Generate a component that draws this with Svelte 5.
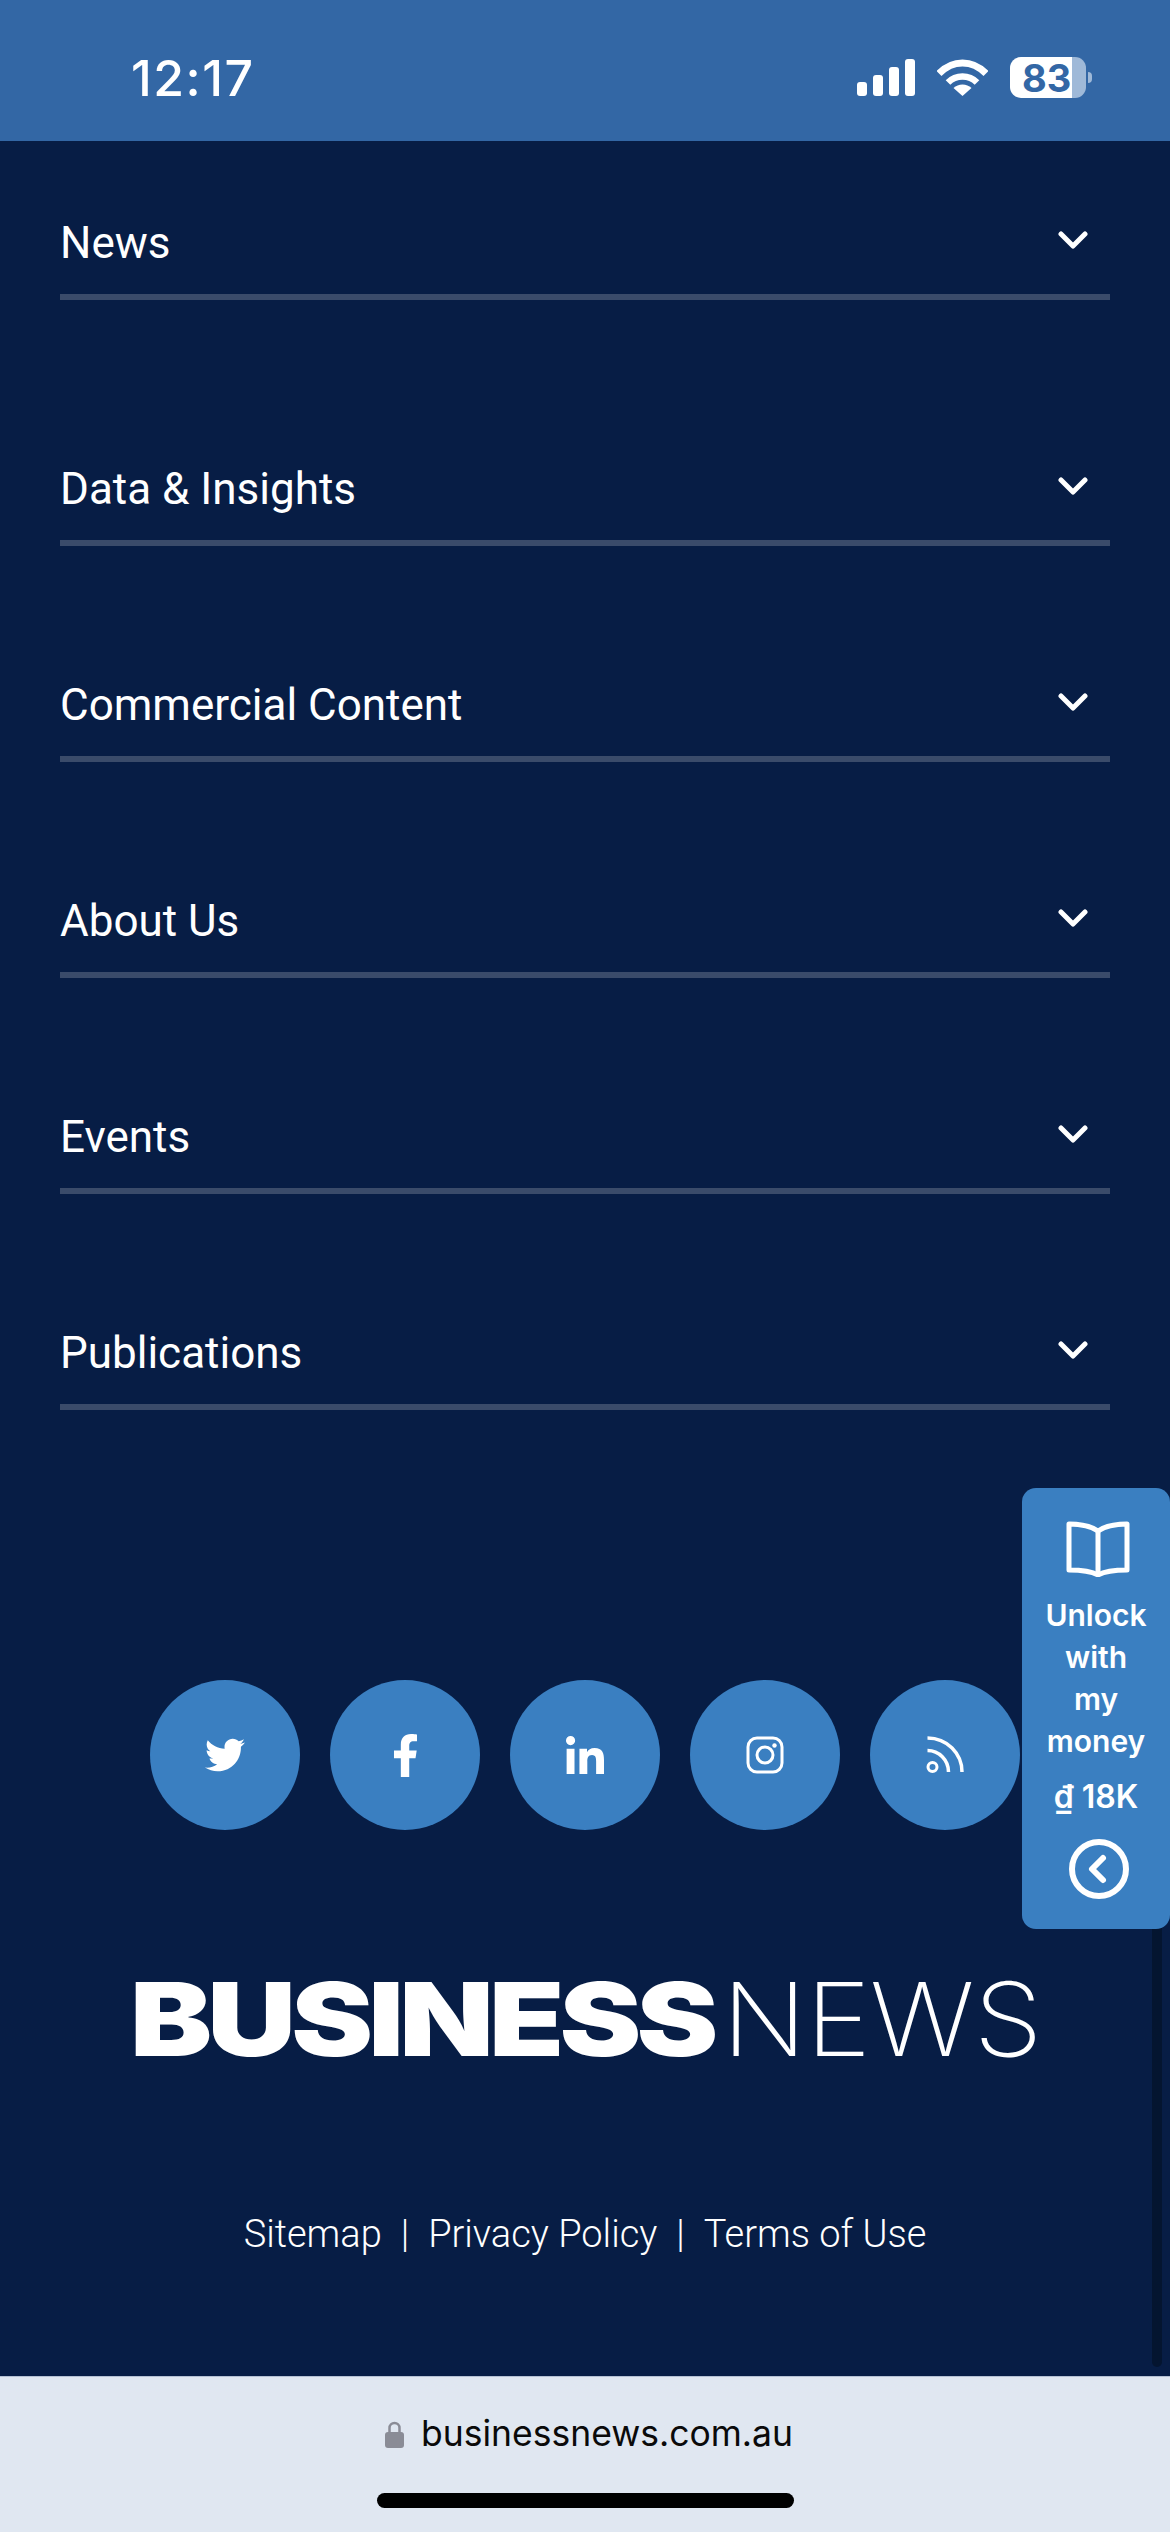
<script>
  const sections = ['News', 'Data & Insights', 'Commercial Content', 'About Us', 'Events', 'Publications'];
</script>

<div class="page">
  <header class="status">
    <span class="time">12:17</span>
    <div class="status-icons">
      <div class="signal">
        <i class="b1"></i><i class="b2"></i><i class="b3"></i><i class="b4"></i>
      </div>
      <svg class="wifi" viewBox="0 0 51 37" aria-hidden="true">
        <path d="M2 14.500C8.500 8 16.500 4 25.500 4S42.500 8 49 14.500" fill="none" stroke="#fff" stroke-width="7"/>
        <path d="M11 23.500C15 19.500 20 17.500 25.500 17.500S36 19.500 40 23.500" fill="none" stroke="#fff" stroke-width="6.500"/>
        <path d="M16.500 29C19 26.700 22 25.500 25.500 25.500S32 26.700 34.500 29L25.500 37Z" fill="#fff"/>
      </svg>
      <div class="battery">
        <div class="cell"><span>83</span></div>
        <i class="nub"></i>
      </div>
    </div>
  </header>

  <nav class="menu">
    {#each sections as name, i}
      <div class="row" class:first={i === 0}>
        <span class="name">{name}</span>
        <svg class="chev" viewBox="0 0 30 18" aria-hidden="true">
          <path d="M3 3L15 15L27 3" fill="none" stroke="#fff" stroke-width="5" stroke-linecap="round" stroke-linejoin="round"/>
        </svg>
      </div>
    {/each}
  </nav>

  <div class="social">
    <div class="circle">
      <svg class="tw" viewBox="0 0 512 512" aria-hidden="true"><path fill="#fff" d="M459.37 151.716c.325 4.548.325 9.097.325 13.645 0 138.72-105.583 298.558-298.558 298.558-59.452 0-114.68-17.219-161.137-47.106 8.447.974 16.568 1.299 25.34 1.299 49.055 0 94.213-16.568 130.274-44.832-46.132-.975-84.792-31.188-98.112-72.772 6.498.974 12.995 1.624 19.818 1.624 9.421 0 18.843-1.3 27.614-3.573-48.081-9.747-84.143-51.98-84.143-102.985v-1.299c13.969 7.797 30.214 12.67 47.431 13.319-28.264-18.843-46.781-51.005-46.781-87.391 0-19.492 5.197-37.36 14.294-52.954 51.655 63.675 129.3 105.258 216.365 109.807-1.624-7.797-2.599-15.918-2.599-24.04 0-57.828 46.782-104.934 104.934-104.934 30.213 0 57.502 12.67 76.67 33.137 23.715-4.548 46.456-13.32 66.599-25.34-7.798 24.366-24.366 44.833-46.132 57.827 21.117-2.273 41.584-8.122 60.426-16.243-14.292 20.791-32.161 39.308-52.628 54.253z"/></svg>
    </div>
    <div class="circle">
      <svg class="fb" viewBox="0 0 320 512" aria-hidden="true"><path fill="#fff" d="M279.14 288l14.22-92.66h-88.91v-60.13c0-25.35 12.42-50.06 52.24-50.06h40.42V6.26S260.43 0 225.36 0c-73.22 0-121.08 44.38-121.08 124.72v70.62H22.89V288h81.39v224h100.17V288z"/></svg>
    </div>
    <div class="circle">
      <svg class="li" viewBox="0 0 448 448" aria-hidden="true"><path fill="#fff" d="M100.28 448H7.4V148.9h92.88zM53.79 108.1C24.09 108.1 0 83.5 0 53.8a53.79 53.79 0 0 1 107.58 0c0 29.7-24.1 54.3-53.79 54.3zM447.9 448h-92.68V302.4c0-34.7-.7-79.2-48.29-79.2-48.29 0-55.69 37.7-55.69 76.7V448h-92.78V148.9h89.08v40.8h1.3c12.4-23.5 42.69-48.3 87.88-48.3 94 0 111.28 61.9 111.28 142.3V448z"/></svg>
    </div>
    <div class="circle">
      <svg class="ig" viewBox="0 0 38 38" fill="none" stroke="#fff" aria-hidden="true">
        <rect x="2" y="2" width="34" height="34" rx="9" stroke-width="3"/>
        <circle cx="19" cy="19" r="8" stroke-width="3"/>
        <circle cx="28.500" cy="9.500" r="2.200" fill="#fff" stroke="none"/>
      </svg>
    </div>
    <div class="circle">
      <svg class="rss" viewBox="0 0 38 38" fill="none" stroke="#fff" aria-hidden="true">
        <circle cx="6.500" cy="31" r="4.500" stroke-width="3"/>
        <path d="M1.500 14.500C13 14.500 22.500 24 22.500 36" stroke-width="3.500"/>
        <path d="M1.500 2C21 2 36 17.500 36 36" stroke-width="3.500"/>
      </svg>
    </div>
  </div>

  <div class="logo"><b>BUSINESS</b><span>NEWS</span></div>

  <div class="links">
    <span>Sitemap</span><i>|</i><span>Privacy Policy</span><i>|</i><span>Terms of Use</span>
  </div>

  <footer class="urlbar">
    <div class="url">
      <svg class="lock" viewBox="0 0 19 27" aria-hidden="true">
        <path d="M4.500 12V7a5 5 0 0 1 10 0v5" fill="none" stroke="#8a8c96" stroke-width="2.500"/>
        <rect y="11" width="19" height="16" rx="3" fill="#8a8c96"/>
      </svg>
      <span>businessnews.com.au</span>
    </div>
    <div class="home"></div>
  </footer>

  <div class="scrollbar"></div>

  <aside class="unlock">
    <svg class="book" viewBox="0 0 66 56" fill="none" stroke="#fff" stroke-width="5" aria-hidden="true">
      <path d="M33 10C26 5 14 3 4 3V49C14 49 26 50 33 54C40 50 52 49 62 49V3C52 3 40 5 33 10Z" stroke-linejoin="round"/>
      <path d="M33 10V54"/>
    </svg>
    <p class="label">Unlock<br>with<br>my<br>money</p>
    <p class="price">₫ 18K</p>
    <svg class="back" viewBox="0 0 60 60" fill="none" stroke="#fff" aria-hidden="true">
      <circle cx="30" cy="30" r="27" stroke-width="6"/>
      <path d="M34 19L23 30L34 41" stroke-width="6" stroke-linecap="round" stroke-linejoin="round"/>
    </svg>
  </aside>
</div>

<style>
  :global(body) {
    margin: 0;
    background: #071d45;
  }

  .page {
    position: relative;
    width: 1170px;
    height: 2532px;
    overflow: hidden;
    display: flex;
    flex-direction: column;
    background: #071d45;
    color: #fff;
    font-family: Roboto, "Liberation Sans", sans-serif;
  }

  .status {
    flex: none;
    height: 141px;
    padding: 14px 78px 0 131px;
    box-sizing: border-box;
    display: flex;
    align-items: center;
    justify-content: space-between;
    background: #3367a5;
  }

  .time {
    font: 500 50px/1 Inter, sans-serif;
    letter-spacing: 1.500px;
  }

  .status-icons {
    display: flex;
    align-items: center;
    gap: 22px;
  }

  .signal {
    display: flex;
    align-items: flex-end;
    gap: 6px;
    height: 37px;
  }

  .signal i {
    display: block;
    width: 10px;
    border-radius: 3px;
    background: #fff;
  }

  .b1 { height: 14px; }
  .b2 { height: 21px; }
  .b3 { height: 29px; }
  .b4 { height: 37px; }

  .wifi {
    display: block;
    width: 51px;
    height: 37px;
  }

  .battery {
    display: flex;
    align-items: center;
    gap: 2px;
  }

  .cell {
    width: 76px;
    height: 41px;
    border-radius: 11px;
    display: flex;
    align-items: center;
    padding-left: 12px;
    box-sizing: border-box;
    background: linear-gradient(90deg, #fff 62px, #9fb9d8 62px);
  }

  .cell span {
    font: 700 38px/1 Inter, sans-serif;
    color: #3367a5;
  }

  .nub {
    display: block;
    width: 4px;
    height: 11px;
    border-radius: 0 4px 4px 0;
    background: #9fb9d8;
  }

  .menu {
    flex: none;
    padding: 0 60px;
  }

  .row {
    height: 106px;
    margin-top: 110px;
    padding-right: 22px;
    box-sizing: border-box;
    display: flex;
    align-items: center;
    justify-content: space-between;
    border-bottom: 6px solid #3a4b6a;
    font-size: 44px;
    font-weight: 400;
  }

  .row.first {
    margin-top: 53px;
    margin-bottom: 140px;
  }

  .row.first + .row {
    margin-top: 0;
  }

  .name {
    margin-top: -2px;
  }

  .chev {
    width: 30px;
    height: 18px;
    margin-top: -8px;
  }

  .social {
    flex: none;
    margin-top: 270px;
    display: flex;
    justify-content: center;
    gap: 30px;
  }

  .circle {
    width: 150px;
    height: 150px;
    border-radius: 50%;
    display: flex;
    align-items: center;
    justify-content: center;
    background: #3a7fc1;
  }

  .tw { width: 40px; height: 40px; }
  .fb { width: 27px; height: 43px; }
  .li { width: 38px; height: 38px; }
  .ig { width: 38px; height: 38px; }
  .rss { width: 38px; height: 38px; }

  .logo {
    flex: none;
    margin-top: 138px;
    padding-left: 130px;
    display: flex;
    font: 900 102px/1 Inter, sans-serif;
  }

  .logo b {
    display: block;
    width: 578px;
    font-weight: 900;
    letter-spacing: -4px;
    white-space: nowrap;
    transform: scaleX(1.205);
    transform-origin: left center;
  }

  .logo span {
    margin-left: 14px;
    font-weight: 200;
    letter-spacing: -1px;
    transform: scaleX(1.085);
    transform-origin: left center;
  }

  .links {
    flex: none;
    margin-top: 142px;
    display: flex;
    justify-content: center;
    gap: 19px;
    font-size: 38px;
    font-weight: 300;
  }

  .links i {
    font-style: normal;
  }

  .urlbar {
    flex: none;
    margin-top: auto;
    height: 156px;
    display: flex;
    flex-direction: column;
    align-items: center;
    background: #e0e7f1;
    border-top: 1px solid #b4c0d4;
    box-sizing: border-box;
  }

  .url {
    display: flex;
    align-items: center;
    gap: 17px;
    margin: 36px 0 0 8px;
    color: #0a0a0a;
    font: 400 35.500px/1.2 Inter, sans-serif;
  }

  .lock {
    width: 19px;
    height: 27px;
  }

  .home {
    width: 417px;
    height: 15px;
    margin-top: 37px;
    border-radius: 8px;
    background: #000;
  }

  .scrollbar {
    position: absolute;
    right: 8px;
    top: 1900px;
    width: 10px;
    height: 467px;
    border-radius: 5px;
    background: #041530;
  }

  .unlock {
    position: absolute;
    top: 1488px;
    right: 0;
    width: 148px;
    height: 441px;
    box-sizing: border-box;
    padding-top: 33px;
    display: flex;
    flex-direction: column;
    align-items: center;
    border-radius: 14px;
    background: #3a7fc1;
    font-family: Inter, sans-serif;
  }

  .book {
    width: 66px;
    height: 56px;
    margin-left: 4px;
  }

  .label {
    margin: 17px 0 0;
    text-align: center;
    font-size: 30px;
    font-weight: 600;
    line-height: 42px;
  }

  .price {
    margin: 15px 0 0;
    font-size: 32px;
    font-weight: 600;
    line-height: 40px;
  }

  .back {
    width: 60px;
    height: 60px;
    margin: 22px 0 0 6px;
  }
</style>
